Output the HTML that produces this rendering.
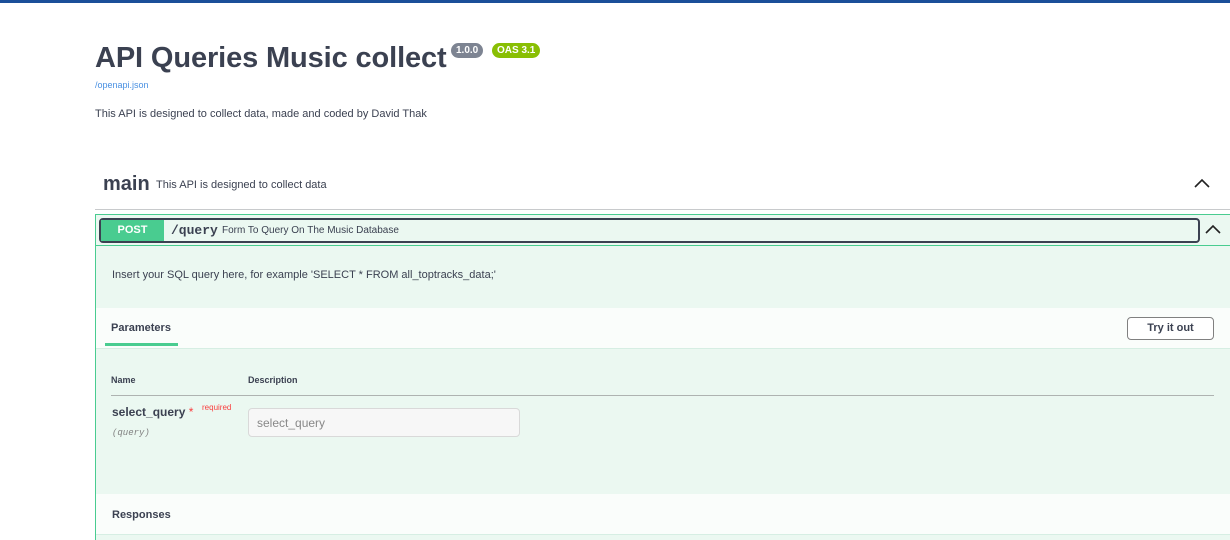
<!DOCTYPE html>
<html><head><style>
*{margin:0;padding:0;box-sizing:border-box}
html,body{width:1230px;height:540px;overflow:hidden}
body{background:#fff;font-family:"Liberation Sans",sans-serif;color:#3b4151;position:relative}
.abs{position:absolute}
</style></head><body>
<div class="abs" style="left:0;top:0;width:1230px;height:3px;background:#1b4f99"></div>
<div class="abs" style="left:95px;top:42px;font-size:29px;font-weight:bold;color:#3b4151;white-space:nowrap;letter-spacing:-0.12px">API Queries Music collect</div>
<div class="abs" style="left:451px;top:43px;height:15px;padding:0 5px;border-radius:8px;background:#7d8492;color:#fff;font-size:10px;font-weight:bold;line-height:15px">1.0.0</div>
<div class="abs" style="left:492px;top:43px;height:15px;padding:0 5px;border-radius:8px;background:#89bf04;color:#fff;font-size:10px;font-weight:bold;line-height:15px">OAS 3.1</div>
<div class="abs" style="left:95px;top:80px;font-size:9px;color:#4990e2">/openapi.json</div>
<div class="abs" style="left:95px;top:108px;font-size:11px">This API is designed to collect data, made and coded by David Thak</div>

<div class="abs" style="left:103px;top:173px;font-size:20px;font-weight:bold">main</div>
<div class="abs" style="left:156px;top:179px;font-size:11px">This API is designed to collect data</div>
<svg class="abs" style="left:1194px;top:177px" width="16" height="12" viewBox="0 0 16 12"><path d="M1 10 L8 3 L15 10" fill="none" stroke="#222" stroke-width="1.6"/></svg>
<div class="abs" style="left:95px;top:209px;width:1135px;height:1px;background:#c8cacc"></div>

<div class="abs" style="left:95px;top:214px;width:1140px;height:340px;border:1px solid #49cc90;background:#ebf8f1"></div>
<div class="abs" style="left:96px;top:245px;width:1134px;height:1px;background:#49cc90"></div>
<div class="abs" style="left:99px;top:218px;width:1101px;height:25px;border:2px solid #3b4151;border-radius:4px"></div>
<div class="abs" style="left:101px;top:220px;width:63px;height:21px;background:#49cc90;color:#fff;font-size:11px;font-weight:bold;text-align:center;line-height:21px">POST</div>
<div class="abs" style="left:171px;top:223px;font-family:'Liberation Mono',monospace;font-size:13px;font-weight:bold;color:#3b4151">/query</div>
<div class="abs" style="left:222px;top:225px;font-size:10px">Form To Query On The Music Database</div>
<svg class="abs" style="left:1205px;top:223px" width="16" height="12" viewBox="0 0 16 12"><path d="M1 10 L8 3 L15 10" fill="none" stroke="#222" stroke-width="1.6"/></svg>

<div class="abs" style="left:112px;top:269px;font-size:11px">Insert your SQL query here, for example 'SELECT * FROM all_toptracks_data;'</div>

<div class="abs" style="left:96px;top:308px;width:1134px;height:41px;background:#fafdfb;border-bottom:1px solid #d6eee3"></div>
<div class="abs" style="left:111px;top:322px;font-size:11px;font-weight:bold">Parameters</div>
<div class="abs" style="left:105px;top:343px;width:73px;height:3px;background:#49cc90"></div>
<div class="abs" style="left:1127px;top:317px;width:87px;height:23px;border:1px solid #808080;border-radius:4px;background:#fff;font-size:11px;font-weight:bold;text-align:center;line-height:21px">Try it out</div>

<div class="abs" style="left:111px;top:375px;font-size:9px;font-weight:bold">Name</div>
<div class="abs" style="left:248px;top:375px;font-size:9px;font-weight:bold">Description</div>
<div class="abs" style="left:111px;top:395px;width:1103px;height:1px;background:#aeb3b1"></div>
<div class="abs" style="left:112px;top:405px;font-size:12px;font-weight:bold">select_query <span style="color:#f93e3e;font-weight:normal;font-size:12px">*</span></div>
<div class="abs" style="left:202px;top:403px;font-size:8px;color:#f93e3e">required</div>
<div class="abs" style="left:112px;top:428px;font-size:9px;font-style:italic;color:#808080;font-family:'Liberation Mono',monospace">(query)</div>
<div class="abs" style="left:248px;top:408px;width:272px;height:29px;border:1px solid #d9d9d9;border-radius:4px;background:#f7f7f7;font-size:12px;color:#888;padding:7px 8px">select_query</div>

<div class="abs" style="left:96px;top:494px;width:1134px;height:41px;background:#fafdfb;border-bottom:1px solid #d6eee3"></div>
<div class="abs" style="left:112px;top:509px;font-size:11px;font-weight:bold">Responses</div>
</body></html>
